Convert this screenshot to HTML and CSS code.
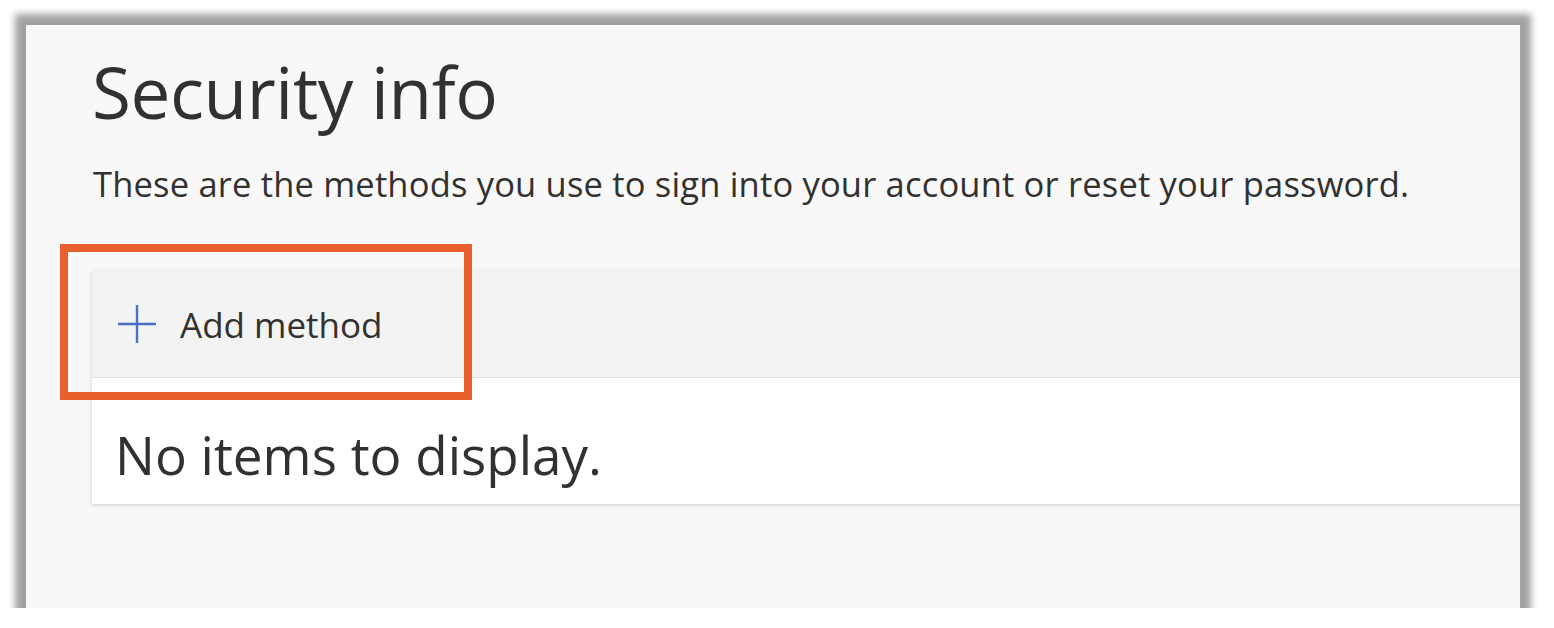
FILE: index.html
```html
<!DOCTYPE html>
<html lang="en">
<head>
<meta charset="utf-8">
<title>Security info</title>
<link rel="stylesheet" href="styles.css">
</head>
<body>
<div class="frame">
  <div class="panel">
    <h1 class="title">Security info</h1>
    <p class="subtitle">These are the methods you use to sign into your account or reset your password.</p>
    <div class="methods">
      <div class="methods-header">
        <button class="add-btn" type="button">
          <svg class="plus" width="40" height="40" viewBox="0 0 40 40" aria-hidden="true">
            <path d="M20 1V39M1 20H39" stroke="#4a70c4" stroke-width="2.4" fill="none"/>
          </svg>
          <span>Add method</span>
        </button>
      </div>
      <div class="methods-body">No items to display.</div>
    </div>
    <div class="highlight"></div>
  </div>
</div>
</body>
</html>
```
FILE: styles.css
```css
html, body {
  margin: 0;
  padding: 0;
  background: #ffffff;
}
body {
  font-family: "Open Sans", "Noto Sans", sans-serif;
  color: #323130;
}
.frame {
  padding: 25px 0 0 26px;
}
.panel {
  position: relative;
  width: 1494px;
  height: 583px;
  background: #f8f8f8;
  box-shadow: 0 0 7px 11px rgba(0, 0, 0, 0.37);
  overflow: hidden;
  padding-left: 66px;
  padding-top: 27px;
  box-sizing: border-box;
}
.title {
  margin: 0;
  font-size: 71px;
  font-weight: 400;
  line-height: 80px;
  letter-spacing: -0.4px;
}
.subtitle {
  margin: 32px 0 0 1px;
  font-size: 34.5px;
  line-height: 40px;
  letter-spacing: 0.18px;
}
.methods {
  margin-top: 67px;
  width: 1500px;
  box-shadow: 0 1px 4px rgba(0, 0, 0, 0.18);
}
.methods-header {
  height: 106px;
  background: #f3f3f3;
  border-bottom: 1px solid #e1e1e1;
  display: flex;
  align-items: center;
  padding-left: 25px;
}
.add-btn {
  display: flex;
  align-items: center;
  gap: 23px;
  border: 0;
  background: transparent;
  padding: 0;
  font-family: inherit;
  font-size: 35px;
  color: #323130;
}
.methods-body {
  height: 126px;
  background: #ffffff;
  padding: 40px 0 0 23px;
  box-sizing: border-box;
  font-size: 53px;
  line-height: normal;
}
.highlight {
  position: absolute;
  left: 34px;
  top: 219px;
  width: 412px;
  height: 156px;
  border: 8px solid #e8602c;
  box-sizing: border-box;
}
```
